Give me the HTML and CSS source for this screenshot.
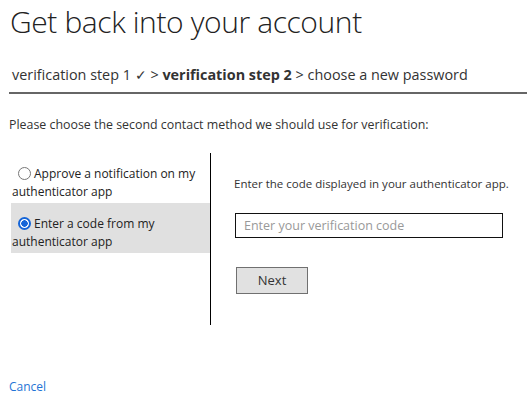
FILE: index.html
```html
<!DOCTYPE html>
<html>
<head>
<meta charset="utf-8">
<link rel="stylesheet" href="styles.css">
</head>
<body>
<div class="page">
  <h1 class="title">Get back into your account</h1>
  <div class="steps">verification step 1 ✓ &gt; <b>verification step 2</b> &gt; choose a new password</div>
  <div class="rule"></div>
  <p class="intro">Please choose the second contact method we should use for verification:</p>
  <div class="methods">
    <div class="options">
      <div class="option">
        <span class="radio"></span><span class="label">Approve a notification on my authenticator app</span>
      </div>
      <div class="option selected">
        <span class="radio checked"></span><span class="label">Enter a code from my authenticator app</span>
      </div>
    </div>
    <div class="detail">
      <p class="hint">Enter the code displayed in your authenticator app.</p>
      <div class="input"><span class="placeholder">Enter your verification code</span></div>
      <div class="button">Next</div>
    </div>
  </div>
  <a class="cancel" href="#">Cancel</a>
</div>
</body>
</html>
```
FILE: styles.css
```css
html, body {
  margin: 0;
  padding: 0;
  background: #fff;
}
.page {
  font-family: "Open Sans", "Noto Sans", sans-serif;
  color: #333;
  padding: 0 0 0 9px;
}
.title {
  font-weight: 300;
  font-size: 30px;
  line-height: 40px;
  margin: 2px 0 0 1px;
  color: #222;
  letter-spacing: -0.4px;
}
.steps {
  font-size: 14.4px;
  line-height: 20px;
  margin: 23px 0 0 3px;
  color: #333;
}
.steps b {
  font-weight: 700;
}
.rule {
  height: 2px;
  background: #666;
  margin-top: 7px;
}
.intro {
  font-size: 12.4px;
  line-height: 16px;
  margin: 23px 0 0 0;
  color: #333;
}
.methods {
  display: grid;
  grid-template-columns: 200px 1fr;
  margin: 20px 0 0 2px;
}
.options {
  border-right: 1px solid #000;
  height: 172px;
  box-sizing: border-box;
}
.option {
  font-size: 12px;
  line-height: 18px;
  padding: 12px 6px 2px 1px;
  color: #222;
}
.option.selected {
  background: #e0e0e0;
}
.radio {
  display: inline-block;
  width: 13px;
  height: 13px;
  border: 1.5px solid #777;
  border-radius: 50%;
  box-sizing: border-box;
  margin: 0 3px 0 6px;
  vertical-align: -2px;
  background: #fff;
}
.radio.checked {
  border: 2px solid #1565d8;
  background: radial-gradient(circle, #1565d8 0 3px, #fff 3.5px);
}
.detail {
  padding-left: 23px;
}
.hint {
  font-size: 11.5px;
  line-height: 16px;
  margin: 23px 0 0 0;
  color: #333;
}
.input {
  margin-top: 21px;
  width: 268px;
  height: 25px;
  border: 1px solid #111;
  box-sizing: border-box;
  padding: 0 8px;
  font-size: 12.5px;
  line-height: 23px;
  margin-left: 1px;
}
.placeholder {
  color: #999;
}
.button {
  margin: 29px 0 0 2px;
  width: 72px;
  height: 27px;
  box-sizing: border-box;
  border: 1px solid #707070;
  background: #e1e1e1;
  text-align: center;
  font-size: 13px;
  line-height: 25px;
  color: #333;
}
.cancel {
  display: inline-block;
  margin-top: 54px;
  font-size: 12px;
  line-height: 16px;
  color: #1f74d6;
  text-decoration: none;
}
```
